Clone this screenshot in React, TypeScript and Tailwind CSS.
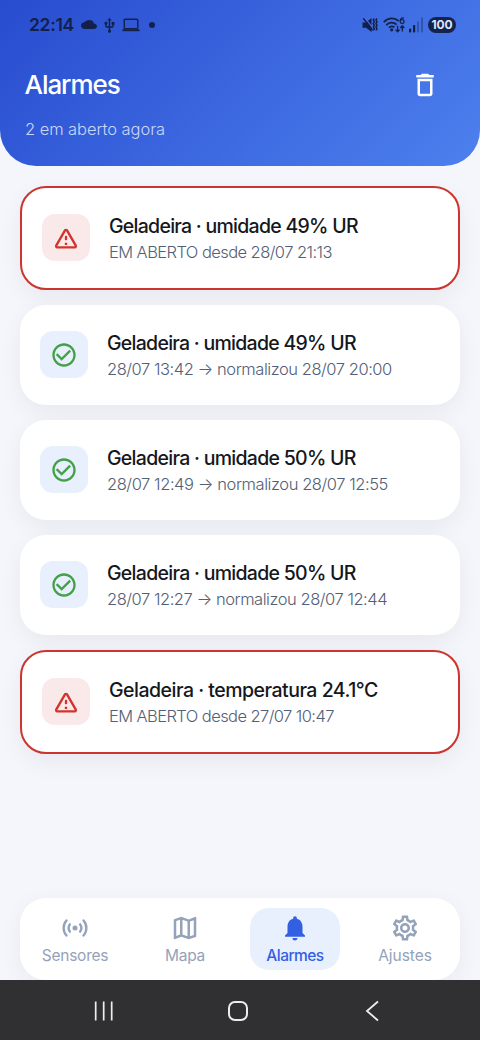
import React from 'react';
import {
    MdCheckCircleOutline,
    MdCloud,
    MdDeleteOutline,
    MdNotifications,
    MdOutlineMap,
    MdOutlineSettings,
    MdUsb,
} from 'react-icons/md';

interface Alarm {
    title: string;
    detail: string;
    open: boolean;
    titleTracking: string;
    detailTracking: string;
}

const alarms: Alarm[] = [
    { title: 'Geladeira · umidade 49% UR', detail: 'EM ABERTO desde 28/07 21:13', open: true, titleTracking: 'tracking-[-0.73px]', detailTracking: 'tracking-[-0.57px]' },
    { title: 'Geladeira · umidade 49% UR', detail: '28/07 13:42 → normalizou 28/07 20:00', open: false, titleTracking: 'tracking-[-0.73px]', detailTracking: 'tracking-[-0.45px]' },
    { title: 'Geladeira · umidade 50% UR', detail: '28/07 12:49 → normalizou 28/07 12:55', open: false, titleTracking: 'tracking-[-0.72px]', detailTracking: 'tracking-[-0.43px]' },
    { title: 'Geladeira · umidade 50% UR', detail: '28/07 12:27 → normalizou 28/07 12:44', open: false, titleTracking: 'tracking-[-0.72px]', detailTracking: 'tracking-[-0.46px]' },
    { title: 'Geladeira · temperatura 24.1°C', detail: 'EM ABERTO desde 27/07 10:47', open: true, titleTracking: 'tracking-[-0.5px]', detailTracking: 'tracking-[-0.58px]' },
];

const WarningIcon = () => (
    <svg viewBox="0 0 24 24" className="size-7" fill="currentColor">
        <path d="M12 5.99 19.53 19H4.47L12 5.99M2.74 18c-.77 1.33.19 3 1.73 3h15.06c1.54 0 2.5-1.67 1.73-3L13.73 4.99c-.77-1.33-2.69-1.33-3.46 0L2.74 18zM11 11v2c0 .55.45 1 1 1s1-.45 1-1v-2c0-.55-.45-1-1-1s-1 .45-1 1zm0 5h2v2h-2z" />
    </svg>
);

const SensorsIcon = () => (
    <svg viewBox="0 0 24 24" className="size-[30px]" fill="none" stroke="currentColor" strokeWidth="1.9" strokeLinecap="round">
        <path d="M5.2 6a9 9 0 0 0 0 12M18.8 6a9 9 0 0 1 0 12M7.9 9.1a5 5 0 0 0 0 5.8M16.1 9.1a5 5 0 0 1 0 5.8" />
        <circle cx="12" cy="12" r="2" fill="currentColor" stroke="none" />
    </svg>
);

const StatusBar = () => (
    <div className="flex h-[50px] items-center justify-between pl-[29px] pr-6 text-[#12204a]">
        <div className="flex items-center">
            <span className="w-[52px] whitespace-nowrap text-[17.5px] font-semibold tracking-[-0.3px]">22:14</span>
            <svg viewBox="0 4 24 16" className="mb-px h-[9px] w-[16px]" preserveAspectRatio="none">
                <MdCloud size={24} />
            </svg>
            <MdUsb className="ml-[4px] size-[17px]" />
            <svg viewBox="0 0 18 14" className="ml-[3.5px] h-[14px] w-[18px]" fill="none" stroke="currentColor" strokeWidth="1.4">
                <rect x="2.2" y="1.2" width="13.6" height="9.4" rx="1" />
                <path d="M.5 12.2h17" strokeWidth="2" />
            </svg>
            <span className="ml-[9.5px] size-[5.5px] rounded-full bg-current" />
        </div>
        <div className="flex items-center">
            <svg viewBox="0 0 16 16" className="size-4" fill="none" stroke="currentColor">
                <path d="M.5 5.5H4l5.5-4.5v14L4 10.8H.5z" fill="currentColor" stroke="none" />
                <path d="M2.4.2 11.5 11.8" stroke="#4471e3" strokeWidth="1.2" />
                <path d="m1.3 1.2 9.2 12" strokeWidth="1.5" />
                <path d="m12.3 1.5-1 1.7 1 1.7-1 1.7 1 1.7-1 1.7 1 1.7-1 1.7M15 1.5l-1 1.7 1 1.7-1 1.7 1 1.7-1 1.7 1 1.7-1 1.7" strokeWidth="1.5" />
            </svg>
            <svg viewBox="0 0 22 16" className="ml-[5px] h-4 w-[22px]" fill="none" stroke="currentColor" strokeWidth="1.8">
                <path d="M.8 5.3C4.8.4 11.5.2 15.5 4M3.3 8.1c2.9-3.2 7.4-3.2 10.3-.5M5.9 10.7c1.5-1.5 3.6-1.7 5.5-.5" />
                <circle cx="8.7" cy="12.8" r="1.6" fill="currentColor" stroke="none" />
                <path d="M14.6 8.8v5.7M12.6 12.6l2 2.2 2-2.2M19.3 14.5V9M17.3 11l2-2.2 2 2.2" strokeWidth="1.3" />
                <path d="M21 1.3c-2.2-1.1-3.9.4-3.9 3" strokeWidth="1.2" />
                <circle cx="19.1" cy="4.6" r="1.9" strokeWidth="1.2" />
            </svg>
            <svg viewBox="0 0 14 16" className="ml-[4px] h-4 w-[14px]" fill="currentColor">
                <rect x="0" y="11.5" width="2.2" height="4" rx=".8" />
                <rect x="4" y="8" width="2.2" height="7.5" rx=".8" />
                <rect x="8" y="4.5" width="2" height="11" rx=".8" opacity=".35" />
                <rect x="12" y=".5" width="2" height="15" rx=".8" opacity=".35" />
            </svg>
            <span className="ml-[5px] flex h-4 w-7 items-center justify-center rounded-full bg-[#14234d] text-[12px] font-bold tracking-[-0.2px] text-[#dde6fb]">100</span>
        </div>
    </div>
);

const Header = () => (
    <header className="h-[165.5px] rounded-b-[36px] bg-linear-[135deg] from-[#284ccf] to-[#4d80ee]">
        <StatusBar />
        <div className="flex items-center justify-between pl-[24.5px] pr-10 pt-[13px]">
            <h1 className="text-[26px] font-medium leading-[43px] tracking-[-1.05px] text-white">Alarmes</h1>
            <MdDeleteOutline className="size-[30px] text-white" />
        </div>
        <p className="pl-[25px] pt-[11px] text-[16.5px] font-light leading-6 tracking-[-0.06px] text-[#cbd7f8]">2 em aberto agora</p>
    </header>
);

const AlarmCard = ({ alarm }: { alarm: Alarm }) => (
    <article
        className={`flex items-center rounded-[26px] bg-white px-5 shadow-[0_8px_24px_rgba(0,0,0,0.055)] ${
            alarm.open ? 'h-[104px] border-2 border-[#cc342d]' : 'h-[100px]'
        }`}
    >
        <div
            className={`flex size-[47.5px] items-center justify-center rounded-[13px] ${
                alarm.open ? 'bg-[#fae9e9] text-[#d0342c]' : 'bg-[#e8effd] text-[#43a047]'
            }`}
        >
            {alarm.open ? <WarningIcon /> : <MdCheckCircleOutline className="size-7" />}
        </div>
        <div className="ml-[19.5px] whitespace-nowrap pt-[3px]">
            <h2 className={`text-[19.5px] font-medium leading-[27px] text-[#15171c] ${alarm.titleTracking}`}>{alarm.title}</h2>
            <p className={`text-[16.5px] font-light leading-[25px] text-[#526077] ${alarm.detailTracking}`}>{alarm.detail}</p>
        </div>
    </article>
);

const tabs = [
    { label: 'Sensores', icon: <SensorsIcon />, active: false, tracking: 'tracking-[-0.25px]' },
    { label: 'Mapa', icon: <MdOutlineMap className="size-[30px]" />, active: false, tracking: 'tracking-[-0.3px]' },
    { label: 'Alarmes', icon: <MdNotifications className="size-[30px]" />, active: true, tracking: 'tracking-[-0.55px]' },
    { label: 'Ajustes', icon: <MdOutlineSettings className="size-[30px]" />, active: false, tracking: 'tracking-[-0.05px]' },
];

const TabBar = () => (
    <nav className="mx-5 grid h-[82.5px] grid-cols-4 rounded-[26px] bg-white py-[10px] shadow-[0_6px_24px_rgba(0,0,0,0.05)]">
        {tabs.map((tab) => (
            <div
                key={tab.label}
                className={`mx-[10px] flex flex-col items-center rounded-[19px] pt-[5.5px] ${
                    tab.active ? 'bg-[#e8effd] text-[#3360e2]' : 'text-[#94a2ba]'
                }`}
            >
                {tab.icon}
                <span className={`mt-[2px] text-[15.5px] leading-[22px] ${tab.tracking} ${tab.active ? 'font-medium' : ''}`}>{tab.label}</span>
            </div>
        ))}
    </nav>
);

const SystemNav = () => (
    <div className="relative flex h-[60px] items-center bg-[#303032] pl-[94px] pt-[2px] text-[#ededed]">
        <svg viewBox="0 0 20 22" className="h-[22px] w-5" stroke="currentColor" strokeWidth="1.7">
            <path d="M1.7 1.5v19M9.7 1.5v19M17.7 1.5v19" />
        </svg>
        <span className="ml-[113.5px] size-5 rounded-[7px] border-2 border-current" />
        <svg viewBox="0 0 14 22" className="ml-[117.5px] h-[22px] w-[14px]" fill="none" stroke="currentColor" strokeWidth="1.8">
            <path d="M13 1.5 2 11l11 9.5" />
        </svg>
    </div>
);

export default function App() {
    return (
        <div className="flex h-[1040px] w-[480px] flex-col overflow-hidden bg-[#f4f6fb] font-['Inter',sans-serif]">
            <Header />
            <main className="flex flex-1 flex-col gap-[15px] px-5 pt-5">
                {alarms.map((alarm) => (
                    <AlarmCard key={alarm.detail} alarm={alarm} />
                ))}
            </main>
            <TabBar />
            <SystemNav />
        </div>
    );
}
